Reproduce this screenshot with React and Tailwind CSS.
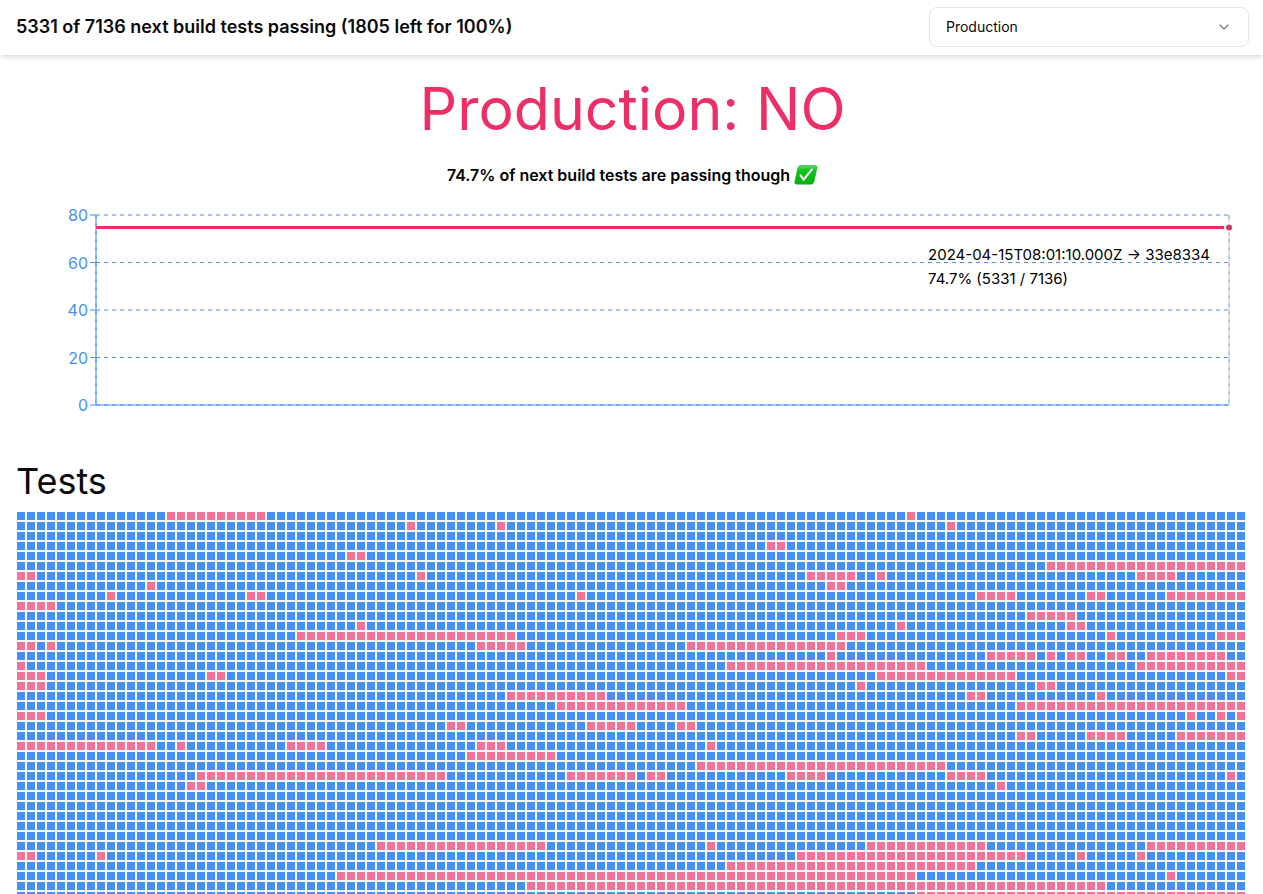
import { ChevronDown } from "lucide-react";

const COLUMNS = 123;

// Inclusive index ranges of failing tests, one list per row of the heat map.
const FAILING = [
  [[15, 24], [89, 89]],
  [[39, 39], [48, 48], [93, 93]],
  [],
  [[75, 76]],
  [[33, 34]],
  [[103, 122]],
  [[0, 1], [40, 40], [79, 83], [86, 86], [112, 115]],
  [[13, 13], [81, 82]],
  [[9, 9], [23, 24], [56, 56], [96, 99], [107, 108], [115, 122]],
  [[0, 3]],
  [[101, 105]],
  [[34, 34], [88, 88], [105, 106]],
  [[28, 49], [82, 84], [109, 109], [120, 122]],
  [[0, 1], [3, 3], [46, 50], [67, 82]],
  [[81, 81], [97, 101], [103, 103], [105, 106], [109, 110], [113, 120]],
  [[0, 0], [71, 90], [112, 122]],
  [[0, 2], [19, 20], [86, 99], [121, 122]],
  [[0, 2], [84, 84], [102, 103]],
  [[49, 58], [95, 96], [108, 108]],
  [[54, 66], [100, 122]],
  [[0, 2], [117, 117], [120, 120], [122, 122]],
  [[43, 44], [57, 61], [66, 67]],
  [[100, 101], [107, 110], [116, 122]],
  [[0, 13], [16, 16], [27, 30], [46, 48], [69, 69]],
  [[45, 53]],
  [[68, 92]],
  [[18, 42], [55, 61], [63, 64], [77, 80], [93, 96], [121, 121]],
  [[17, 18], [98, 98]],
  [],
  [],
  [],
  [],
  [],
  [[36, 52], [69, 69], [85, 96], [113, 122]],
  [[0, 1], [8, 8], [78, 100], [106, 106], [112, 112]],
  [[71, 95]],
  [[32, 89], [115, 115]],
  [[51, 108]],
  [[90, 122]],
];

const TESTS = FAILING.flatMap((ranges) =>
  Array.from({ length: COLUMNS }, (_, i) => !ranges.some(([a, b]) => i >= a && i <= b)),
);

const TICKS = [80, 60, 40, 20, 0];
const PLOT_HEIGHT = 190;
const toY = (value) => PLOT_HEIGHT * (1 - value / 80);

function Header() {
  return (
    <header className="flex items-center justify-between bg-white pt-[7px] pr-3.5 pb-2 pl-4 shadow-md">
      <h1 className="text-lg font-semibold">
        5331 of 7136 next build tests passing (1805 left for 100%)
      </h1>
      <div className="relative w-80">
        <select
          aria-label="Environment"
          className="h-10 w-full appearance-none rounded-lg border border-[#e4e4e4] bg-white px-4 text-sm"
        >
          <option>Production</option>
          <option>Development</option>
        </select>
        <ChevronDown
          className="pointer-events-none absolute top-3 right-[17px] size-4 text-[#7d7d7d]"
          strokeWidth={2}
        />
      </div>
    </header>
  );
}

function CheckEmoji() {
  return (
    <svg viewBox="0 0 24 20" className="h-5 w-6" role="img" aria-label="passing">
      <defs>
        <linearGradient id="check-fill" x1="0" y1="0" x2="0" y2="1">
          <stop offset="0" stopColor="#5fd968" />
          <stop offset="0.25" stopColor="#12c41f" />
          <stop offset="1" stopColor="#00b40c" />
        </linearGradient>
      </defs>
      <path
        d="M6.5 0.5H21Q23.6 0.5 23 3L19.9 16.8Q19.3 19.2 17 19.2H2.8Q0.2 19.2 0.8 16.8L3.9 3Q4.4 0.5 6.5 0.5Z"
        fill="url(#check-fill)"
        stroke="#0a9c14"
        strokeWidth="0.5"
      />
      <path d="M6.6 10.4L9.6 14.6L17.8 4.6" fill="none" stroke="#fff" strokeWidth="2" strokeLinecap="round" />
    </svg>
  );
}

function Chart() {
  return (
    <div className="relative mr-5 ml-20">
      <svg className="block h-[190px] w-full overflow-visible" role="img" aria-label="Passing tests over time">
        <g stroke="#4790f8" strokeDasharray="4 4">
          {TICKS.map((t) => (
            <line key={t} x1="0" x2="100%" y1={toY(t)} y2={toY(t)} />
          ))}
          <line x1="0" x2="0" y1="0" y2="100%" />
          <line x1="100%" x2="100%" y1="0" y2="100%" />
        </g>
        <g stroke="#4790f8">
          <line x1="0" x2="100%" y1="100%" y2="100%" />
          <line x1="0" x2="0" y1="0" y2="100%" />
          {TICKS.map((t) => (
            <line key={t} x1="-6" x2="0" y1={toY(t)} y2={toY(t)} />
          ))}
        </g>
        <g fill="#4790f8" fontSize="16" textAnchor="end">
          {TICKS.map((t) => (
            <text key={t} x="-8" y={toY(t)} dy="6">
              {t}
            </text>
          ))}
        </g>
        <line x1="100%" x2="100%" y1="0" y2="100%" stroke="#ccc" />
        <line x1="0" x2="100%" y1={toY(74.7)} y2={toY(74.7)} stroke="#ee2e66" strokeWidth="3" />
        <circle cx="100%" cy={toY(74.7)} r="4" fill="#ee2e66" stroke="#fff" strokeWidth="2" />
      </svg>
      <div className="absolute top-7 right-[19px] text-[15px] leading-6 text-black">
        <p>2024-04-15T08:01:10.000Z → 33e8334</p>
        <p>74.7% (5331 / 7136)</p>
      </div>
    </div>
  );
}

export default function App() {
  return (
    <div className="h-screen overflow-hidden bg-white font-['Inter',sans-serif] text-[#0a0a0a]">
      <Header />
      <main className="pr-3.5 pl-4">
        <p className="pt-6 text-center text-[59px] leading-[60px] text-[#ee2e66]">Production: NO</p>
        <p className="mt-6 flex items-center justify-center gap-1 font-semibold text-black">
          74.7% of next build tests are passing though
          <CheckEmoji />
        </p>
        <div className="mt-7">
          <Chart />
        </div>
        <h2 className="mt-14 text-4xl">Tests</h2>
        <div
          role="img"
          aria-label="Test results"
          className="mt-2.5 grid grid-cols-[repeat(auto-fill,10px)] auto-rows-[10px]"
        >
          {TESTS.map((passing, i) => (
            <div key={i} className={passing ? "m-px bg-[#458ff8]" : "m-px bg-[#f37398]"} />
          ))}
        </div>
      </main>
    </div>
  );
}
